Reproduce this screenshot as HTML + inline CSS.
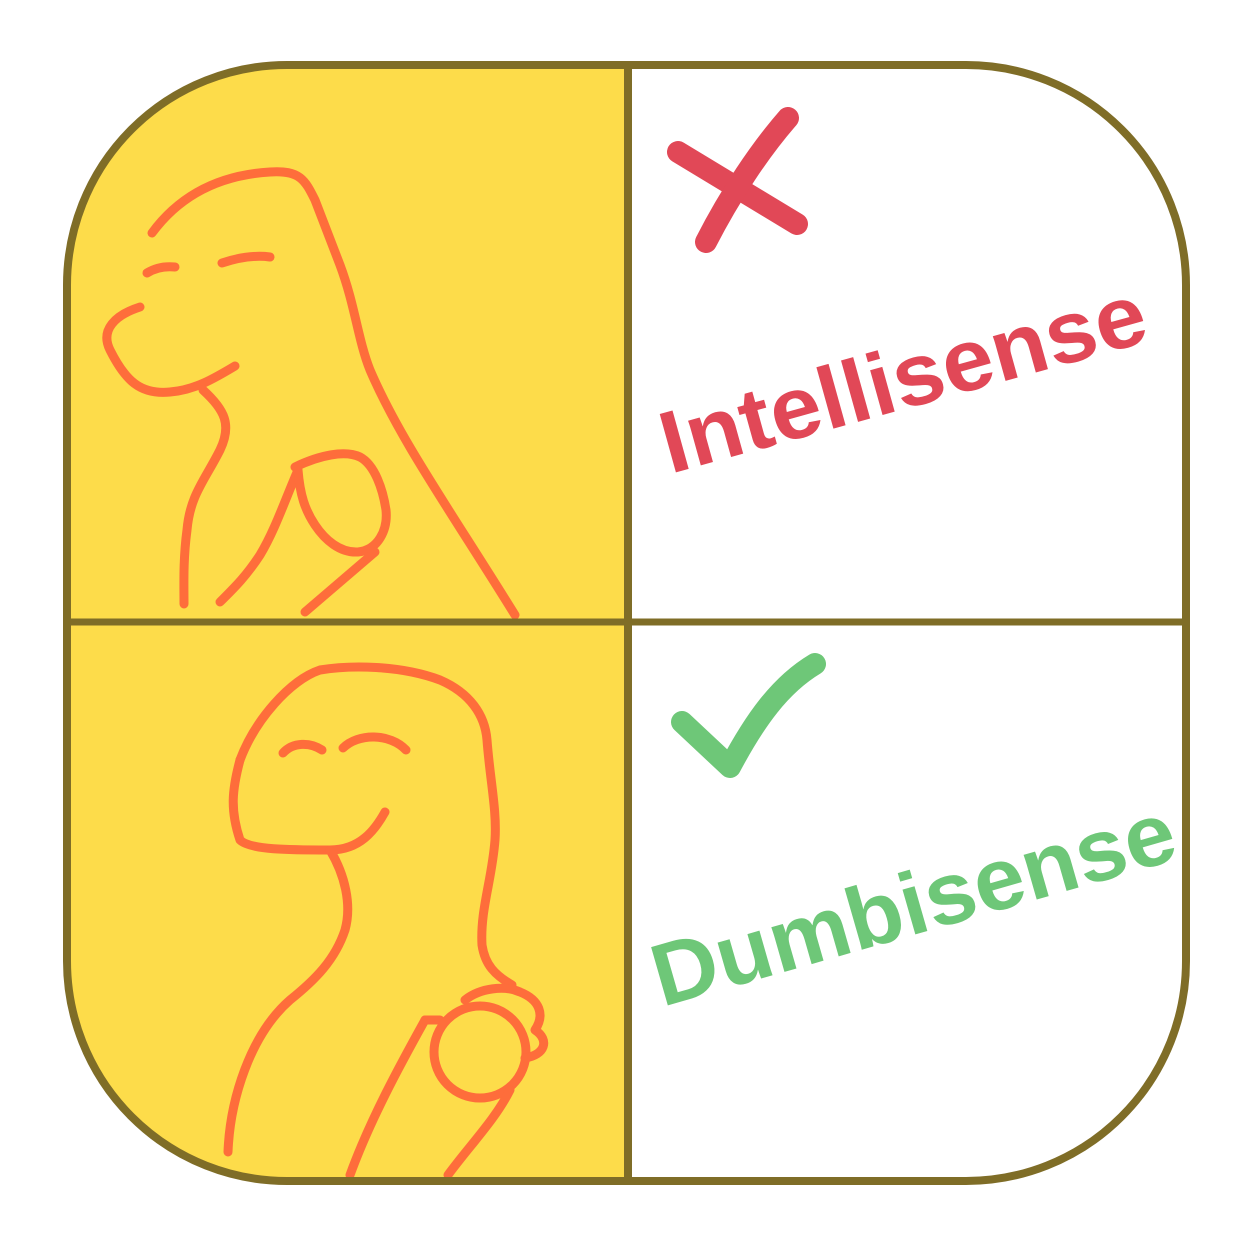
<!DOCTYPE html>
<html><head><style>html,body{margin:0;padding:0;background:#fff}svg{display:block}</style></head>
<body>
<svg width="1250" height="1248" viewBox="0 0 1250 1248" xmlns="http://www.w3.org/2000/svg">
<defs><clipPath id="c"><rect x="67" y="65" width="1119" height="1116" rx="220"/></clipPath></defs>
<rect x="67" y="65" width="1119" height="1116" rx="220" fill="#fff"/>
<g clip-path="url(#c)">
<rect x="60" y="60" width="568" height="1130" fill="#fddc4a"/>
<g fill="none" stroke="#fe6d3b" stroke-width="9" stroke-linecap="round" stroke-linejoin="round">
<path d="M152,233 C180,195 220,175 270,172 C300,170 305,180 315,200 L340,265 C355,305 358,340 370,370 C400,440 450,510 515,615"/>
<path d="M147,273 C155,268 165,266 175,267"/>
<path d="M222,263 C240,257 255,255 270,257"/>
<path d="M140,307 C115,315 100,330 110,350 C125,380 140,395 170,392 C195,390 215,378 235,366"/>
<path d="M203,390 C225,410 232,425 220,450 C205,480 190,495 187,530 C183,560 184,585 184,604"/>
<path d="M298,470 C285,500 275,530 260,555 C245,578 232,590 220,602"/>
<path d="M295,467 C320,455 345,450 360,457 C375,465 383,490 386,510 C388,530 378,550 358,552 C340,553 325,540 315,525 C305,510 300,495 298,470"/>
<path d="M375,552 L305,612"/>
<path d="M240,760 C255,720 290,680 320,670 C350,665 400,665 440,680 C470,693 485,715 487,740 C490,780 497,810 495,840 C492,880 480,910 482,945 C485,965 495,975 512,985"/>
<path d="M283,753 C293,742 310,742 322,750"/>
<path d="M343,748 C358,733 390,733 406,750"/>
<path d="M240,760 C232,790 230,810 240,840 C250,850 290,850 330,850 C360,850 375,830 385,812"/>
<path d="M330,850 C345,875 352,905 345,930 C335,960 315,980 290,1000 C250,1035 230,1100 228,1152"/>
<path d="M425,1020 C400,1065 370,1120 350,1175"/>
<path d="M425,1020 L440,1020"/>
<circle cx="480" cy="1052" r="46"/>
<path d="M465,1000 C480,988 505,985 520,992 C540,1000 545,1015 535,1030 C550,1040 545,1055 525,1058"/>
<path d="M510,1090 C495,1120 470,1145 448,1175"/>
</g>
</g>
<rect x="67" y="65" width="1119" height="1116" rx="220" fill="none" stroke="#7f6d27" stroke-width="8"/>
<line x1="628" y1="65" x2="628" y2="1181" stroke="#7f6d27" stroke-width="8"/>
<line x1="67" y1="622" x2="1186" y2="622" stroke="#7f6d27" stroke-width="7"/>
<g fill="none" stroke-linecap="round" stroke-linejoin="round" stroke-width="22">
<path d="M678,152 L797,224" stroke="#e14857"/>
<path d="M788,118 C760,150 730,195 706,242" stroke="#e14857"/>
<path d="M682,722 L730,767 C755,720 780,685 815,664" stroke="#6ec778"/>
</g>
<text x="0" y="0" transform="translate(670,474) rotate(-15.5)" font-family="Liberation Sans, sans-serif" font-weight="bold" font-size="88" fill="#e14857" textLength="500" lengthAdjust="spacingAndGlyphs">Intellisense</text>
<text x="0" y="0" transform="translate(662,1007) rotate(-16)" font-family="Liberation Sans, sans-serif" font-weight="bold" font-size="88" fill="#6ec778" textLength="540" lengthAdjust="spacingAndGlyphs">Dumbisense</text>
</svg>
</body></html>
